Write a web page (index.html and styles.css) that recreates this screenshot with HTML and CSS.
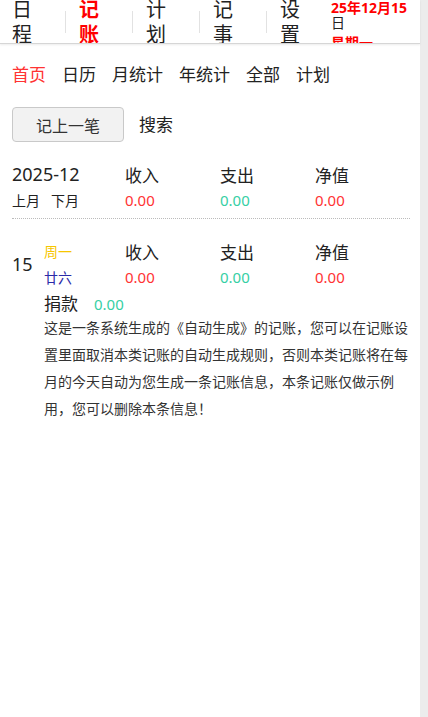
FILE: index.html
```html
<!DOCTYPE html>
<html lang="zh-CN">
<head>
    <meta charset="UTF-8">
    <title>记账</title>
    <meta name="viewport" content="width=device-width, initial-scale=1.0">
    <link rel="stylesheet" href="styles.css">
</head>
<body>
    <div class="page">
        <header class="topbar">
            <nav class="nav">
                <a class="nav-item">日<br>程</a>
                <span class="sep"></span>
                <a class="nav-item active">记<br>账</a>
                <span class="sep"></span>
                <a class="nav-item">计<br>划</a>
                <span class="sep"></span>
                <a class="nav-item">记<br>事</a>
                <span class="sep"></span>
                <a class="nav-item">设<br>置</a>
            </nav>
            <div class="today">
                <div class="today-date"><b>25年12月15</b>日</div>
                <div class="today-week">星期一</div>
            </div>
        </header>

        <main class="content">
            <div class="tabs">
                <a class="tab active">首页</a>
                <a class="tab">日历</a>
                <a class="tab">月统计</a>
                <a class="tab">年统计</a>
                <a class="tab">全部</a>
                <a class="tab">计划</a>
            </div>

            <div class="actions">
                <button class="btn">记上一笔</button>
                <a class="search">搜索</a>
            </div>

            <div class="summary">
                <div class="month">2025-12</div>
                <div class="label">收入</div>
                <div class="label">支出</div>
                <div class="label">净值</div>
                <div class="switch"><a>上月</a><a>下月</a></div>
                <div class="num red">0.00</div>
                <div class="num green">0.00</div>
                <div class="num red">0.00</div>
            </div>

            <div class="day">
                <div class="day-no">15</div>
                <div class="week">周一</div>
                <div class="label">收入</div>
                <div class="label">支出</div>
                <div class="label">净值</div>
                <div class="lunar">廿六</div>
                <div class="num red">0.00</div>
                <div class="num green">0.00</div>
                <div class="num red">0.00</div>
            </div>

            <div class="entry">
                <div class="entry-head">
                    <span class="entry-name">捐款</span>
                    <span class="num green">0.00</span>
                </div>
                <p class="entry-note">这是一条系统生成的《自动生成》的记账，您可以在记账设置里面取消本类记账的自动生成规则，否则本类记账将在每月的今天自动为您生成一条记账信息，本条记账仅做示例用，您可以删除本条信息！</p>
            </div>
        </main>
    </div>
</body>
</html>
```

FILE: styles.css
```css
:root {
    --red: #ff3333;
    --green: #36cfa4;
    --text: #333;
    --line: #d6d6d6;
}

body {
    margin: 0;
    background: #ececec;
    font-family: "Noto Sans", "Noto Sans CJK SC", sans-serif;
    color: var(--text);
}

.page {
    width: 420px;
    min-height: 717px;
    background: #fff;
}

/* top bar */
.topbar {
    height: 43px;
    display: flex;
    overflow: hidden;
    border-bottom: 1px solid var(--line);
    box-shadow: 0 1px 2px rgba(0, 0, 0, 0.08);
}

.nav {
    display: flex;
    align-items: center;
    padding-left: 12px;
}

.nav-item {
    width: 20px;
    font-size: 20px;
    line-height: 25px;
    color: #222;
    text-align: center;
}

.nav-item.active {
    color: #f00;
    font-weight: bold;
}

.sep {
    width: 1px;
    height: 22px;
    margin: 0 13px 0 33px;
    background: #e2e2e2;
}

.today {
    margin-left: 31px;
    width: 80px;
    font-size: 14px;
    line-height: 15px;
    color: #222;
}

.today-date b {
    color: #f00;
}

.today-week {
    margin-top: 5px;
    color: #f00;
    font-weight: bold;
}

/* content */
.content {
    padding: 19px 10px 0 12px;
}

.tabs {
    display: flex;
    gap: 16px;
    font-size: 17px;
    line-height: 24px;
    color: #222;
}

.tab.active {
    color: var(--red);
}

.actions {
    display: flex;
    align-items: center;
    margin-top: 20px;
}

.btn {
    width: 112px;
    height: 35px;
    font-family: inherit;
    font-size: 16px;
    color: #333;
    background: #f2f2f2;
    border: 1px solid #c9c9c9;
    border-radius: 4px;
}

.search {
    margin-left: 15px;
    margin-top: -3px;
    font-size: 17px;
    color: #222;
}

.summary,
.day {
    display: grid;
    grid-template-columns: 113px 95px 95px 95px;
    grid-auto-rows: 26px;
    align-items: center;
}

.summary {
    margin-top: 19px;
    padding-bottom: 5px;
    border-bottom: 1px dotted #bbb;
}

.month {
    font-size: 18px;
    color: #222;
}

.label {
    font-size: 17px;
    color: #222;
}

.switch {
    display: flex;
    gap: 11px;
    font-size: 14px;
    color: #222;
}

.num {
    font-size: 15px;
}

.red {
    color: var(--red);
}

.green {
    color: var(--green);
}

.day {
    margin-top: 19px;
    grid-template-columns: 32px 81px 95px 95px 95px;
}

.day-no {
    grid-row: span 2;
    font-size: 18px;
    color: #222;
}

.week {
    font-size: 14px;
    color: #f7c600;
}

.lunar {
    font-size: 14px;
    color: #2b2ba8;
}

.entry {
    margin-left: 32px;
}

.entry-head {
    display: flex;
    align-items: center;
    gap: 16px;
    margin-top: 4px;
    line-height: 20px;
}

.entry-name {
    font-size: 17px;
    color: #222;
}

.entry-note {
    margin: 0;
    font-size: 14px;
    line-height: 27px;
    color: #333;
}
```
